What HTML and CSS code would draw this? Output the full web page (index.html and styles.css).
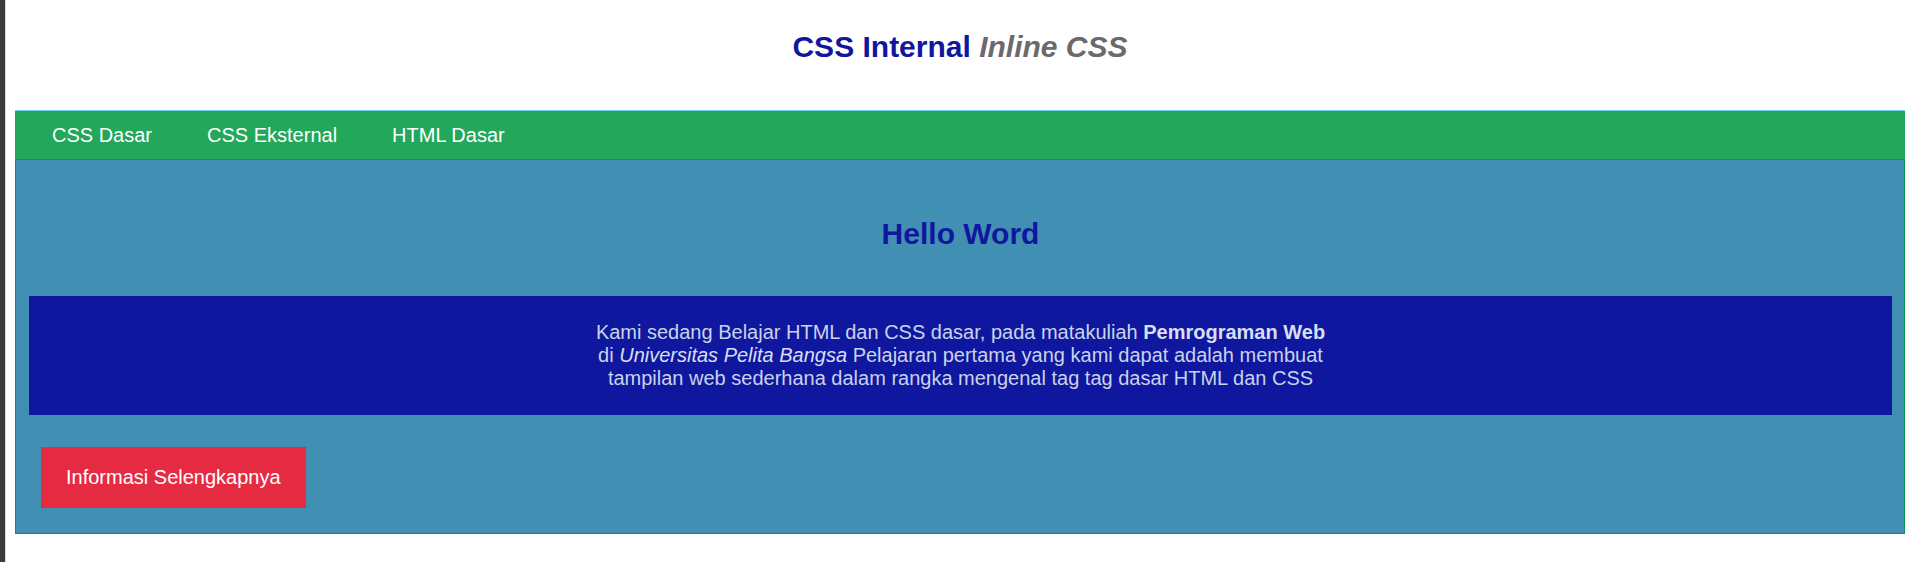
FILE: index.html
```html
<!DOCTYPE html>
<html lang="id">
<head>
  <meta charset="utf-8">
  <title>CSS Internal</title>
  <link rel="stylesheet" href="styles.css">
</head>
<body>
  <div class="page">
    <header class="header">
      <h1 class="title">CSS Internal <i class="title-inline">Inline CSS</i></h1>
    </header>
    <nav class="nav">
      <a class="nav-link" href="#dasar">CSS Dasar</a>
      <a class="nav-link" href="#eksternal">CSS Eksternal</a>
      <a class="nav-link" href="#html">HTML Dasar</a>
    </nav>
    <main class="intro">
      <h2 class="title">Hello Word</h2>
      <div class="banner">
        <p class="banner-text">Kami sedang Belajar HTML dan CSS dasar, pada matakuliah <b>Pemrograman Web</b> di <i class="campus">Universitas Pelita Bangsa</i> Pelajaran pertama yang kami dapat adalah membuat tampilan web sederhana dalam rangka mengenal tag tag dasar HTML dan CSS</p>
      </div>
      <a class="button" href="#intro">Informasi Selengkapnya</a>
    </main>
  </div>
</body>
</html>
```

FILE: styles.css
```css
* {
  box-sizing: border-box;
}

body {
  margin: 0;
  background: #fff;
  font-family: "Liberation Sans", Arial, sans-serif;
  font-size: 20px;
  line-height: 23px;
}

.page {
  min-height: 100vh;
  padding: 0 5px 0 10px;
  border-left: 5px solid #3a3a3a;
  box-shadow: inset 1px 0 #dcdcdc;
}

.header {
  padding: 29px 0 46px;
}

.title {
  margin: 0;
  color: #10179f;
  font-size: 30px;
  line-height: 35px;
  text-align: center;
}

.title-inline {
  color: #6b696b;
}

.nav {
  display: flex;
  gap: 55px;
  padding: 13px 37px 12px;
  border-top: 1px solid #6dcff6;
  background: #22a75b;
}

.nav-link {
  color: #fff;
  text-decoration: none;
}

.intro {
  padding: 56px 12px 25px 13px;
  border: 1px solid #0d9648;
  background: #418fb2;
}

.banner {
  margin: 45px 0 32px;
  padding: 25px;
  background: #10179f;
}

.banner-text {
  max-width: 740px;
  margin: 0 auto;
  color: #c8d3e9;
  text-align: center;
}

.banner-text b,
.campus {
  color: #d5dff0;
}

.button {
  display: block;
  width: fit-content;
  margin-left: 12px;
  padding: 19px 25px;
  background: #e52b42;
  color: #fff;
  text-decoration: none;
}
```
